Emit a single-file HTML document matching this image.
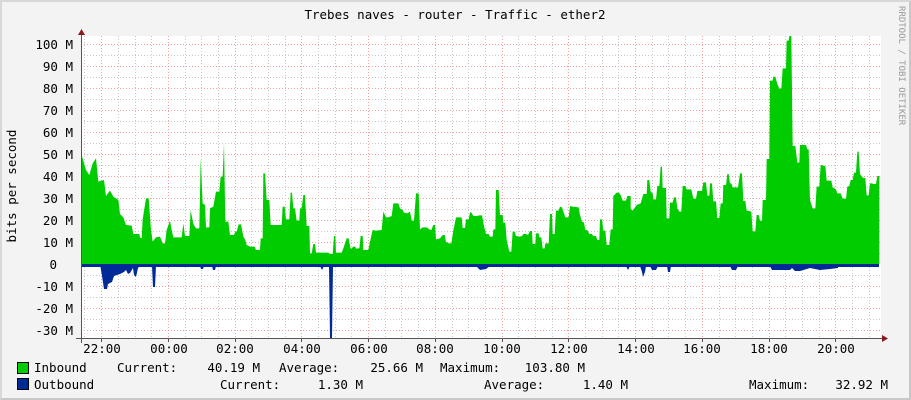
<!DOCTYPE html>
<html><head><meta charset="utf-8"><style>
html,body{margin:0;padding:0;}
body{width:911px;height:400px;background:#f3f3f3;position:relative;overflow:hidden;font-family:"DejaVu Sans Mono","Liberation Mono",monospace;color:#000;}
.fr{position:absolute;left:0;top:0;width:907px;height:396px;border:2px solid #c8c8c8;border-left-color:#d8d8d8;border-top-color:#d8d8d8;}
.t{position:absolute;font-size:12.5px;line-height:14px;white-space:pre;}
.r{text-align:right;}
</style></head><body>
<div class="fr"></div>
<svg width="911" height="400" style="position:absolute;left:0;top:0">
<rect x="81" y="36" width="800" height="302" fill="#fff"/>
<g stroke-dasharray="1,2" stroke-width="1">
<g stroke="#c8c8c8">
<line x1="81" y1="55.5" x2="881" y2="55.5"/><line x1="81" y1="77.5" x2="881" y2="77.5"/><line x1="81" y1="99.5" x2="881" y2="99.5"/><line x1="81" y1="121.5" x2="881" y2="121.5"/><line x1="81" y1="143.5" x2="881" y2="143.5"/><line x1="81" y1="165.5" x2="881" y2="165.5"/><line x1="81" y1="187.5" x2="881" y2="187.5"/><line x1="81" y1="209.5" x2="881" y2="209.5"/><line x1="81" y1="231.5" x2="881" y2="231.5"/><line x1="81" y1="253.5" x2="881" y2="253.5"/><line x1="81" y1="275.5" x2="881" y2="275.5"/><line x1="81" y1="297.5" x2="881" y2="297.5"/><line x1="81" y1="319.5" x2="881" y2="319.5"/>
</g>
<g id="vminor" stroke="#c8c8c8"></g>
<g stroke="#f4a0a0">
<line x1="81" y1="44.5" x2="881" y2="44.5"/><line x1="81" y1="66.5" x2="881" y2="66.5"/><line x1="81" y1="88.5" x2="881" y2="88.5"/><line x1="81" y1="110.5" x2="881" y2="110.5"/><line x1="81" y1="132.5" x2="881" y2="132.5"/><line x1="81" y1="154.5" x2="881" y2="154.5"/><line x1="81" y1="176.5" x2="881" y2="176.5"/><line x1="81" y1="198.5" x2="881" y2="198.5"/><line x1="81" y1="220.5" x2="881" y2="220.5"/><line x1="81" y1="242.5" x2="881" y2="242.5"/><line x1="81" y1="286.5" x2="881" y2="286.5"/><line x1="81" y1="308.5" x2="881" y2="308.5"/><line x1="81" y1="330.5" x2="881" y2="330.5"/>
<line x1="101.5" y1="36" x2="101.5" y2="338"/><line x1="168.5" y1="36" x2="168.5" y2="338"/><line x1="235.5" y1="36" x2="235.5" y2="338"/><line x1="301.5" y1="36" x2="301.5" y2="338"/><line x1="368.5" y1="36" x2="368.5" y2="338"/><line x1="435.5" y1="36" x2="435.5" y2="338"/><line x1="502.5" y1="36" x2="502.5" y2="338"/><line x1="568.5" y1="36" x2="568.5" y2="338"/><line x1="635.5" y1="36" x2="635.5" y2="338"/><line x1="702.5" y1="36" x2="702.5" y2="338"/><line x1="769.5" y1="36" x2="769.5" y2="338"/><line x1="835.5" y1="36" x2="835.5" y2="338"/>
</g>
<g stroke="#c8c8c8">
<line x1="84.5" y1="36" x2="84.5" y2="338"/><line x1="118.5" y1="36" x2="118.5" y2="338"/><line x1="135.5" y1="36" x2="135.5" y2="338"/><line x1="151.5" y1="36" x2="151.5" y2="338"/><line x1="185.5" y1="36" x2="185.5" y2="338"/><line x1="201.5" y1="36" x2="201.5" y2="338"/><line x1="218.5" y1="36" x2="218.5" y2="338"/><line x1="251.5" y1="36" x2="251.5" y2="338"/><line x1="268.5" y1="36" x2="268.5" y2="338"/><line x1="285.5" y1="36" x2="285.5" y2="338"/><line x1="318.5" y1="36" x2="318.5" y2="338"/><line x1="335.5" y1="36" x2="335.5" y2="338"/><line x1="351.5" y1="36" x2="351.5" y2="338"/><line x1="385.5" y1="36" x2="385.5" y2="338"/><line x1="401.5" y1="36" x2="401.5" y2="338"/><line x1="418.5" y1="36" x2="418.5" y2="338"/><line x1="452.5" y1="36" x2="452.5" y2="338"/><line x1="468.5" y1="36" x2="468.5" y2="338"/><line x1="485.5" y1="36" x2="485.5" y2="338"/><line x1="518.5" y1="36" x2="518.5" y2="338"/><line x1="535.5" y1="36" x2="535.5" y2="338"/><line x1="552.5" y1="36" x2="552.5" y2="338"/><line x1="585.5" y1="36" x2="585.5" y2="338"/><line x1="602.5" y1="36" x2="602.5" y2="338"/><line x1="618.5" y1="36" x2="618.5" y2="338"/><line x1="652.5" y1="36" x2="652.5" y2="338"/><line x1="668.5" y1="36" x2="668.5" y2="338"/><line x1="685.5" y1="36" x2="685.5" y2="338"/><line x1="719.5" y1="36" x2="719.5" y2="338"/><line x1="735.5" y1="36" x2="735.5" y2="338"/><line x1="752.5" y1="36" x2="752.5" y2="338"/><line x1="785.5" y1="36" x2="785.5" y2="338"/><line x1="802.5" y1="36" x2="802.5" y2="338"/><line x1="819.5" y1="36" x2="819.5" y2="338"/><line x1="852.5" y1="36" x2="852.5" y2="338"/><line x1="869.5" y1="36" x2="869.5" y2="338"/>
</g>
</g>
<g fill="#00cc00">
<g transform="translate(80,130) scale(0.33333)">
<polygon points="3,402 3,70 8,85 18,120 28,135 38,100 48,85 55,155 72,150 78,198 90,182 100,200 115,210 120,252 130,262 138,285 155,287 160,312 178,312 180,322 185,325 188,268 198,205 206,205 213,300 218,335 228,322 240,320 248,340 255,340 260,300 270,272 275,300 280,322 305,322 310,280 315,318 328,318 332,240 340,282 348,295 358,295 362,85 368,220 375,225 378,292 388,292 390,235 400,230 408,185 418,185 422,140 428,140 432,40 436,275 445,275 450,315 462,315 466,305 470,305 476,283 483,283 490,320 496,330 500,345 510,350 524,350 528,360 540,360 542,325 548,325 550,130 555,130 560,210 568,210 572,285 585,285 605,285 608,230 614,230 618,268 628,268 632,188 636,188 640,235 645,235 650,272 658,272 660,235 665,235 670,195 675,195 680,288 688,288 690,370 695,370 700,342 705,342 708,368 745,368 750,372 758,372 762,318 766,318 768,368 785,368 790,355 800,325 806,325 812,358 820,350 826,350 830,362 838,355 842,352 842,402"/>
</g>
<g transform="translate(350,130) scale(0.33333)">
<polygon points="0,402 0,352 8,362 15,362 20,355 28,355 32,318 38,318 40,360 55,360 60,335 68,300 78,302 95,300 100,245 108,262 115,262 125,258 130,220 145,220 150,235 158,240 162,248 172,250 180,245 185,272 192,272 198,190 206,190 210,298 218,292 230,292 238,298 244,300 250,285 255,285 258,328 270,325 278,315 284,315 288,336 298,340 304,340 310,302 318,262 335,262 338,294 345,294 348,268 356,268 360,247 364,247 370,258 380,258 388,256 396,256 402,288 408,312 416,312 420,320 428,320 430,298 436,298 438,180 446,180 450,255 458,255 460,278 466,278 470,330 478,365 484,365 488,305 494,305 498,318 510,320 516,318 520,312 528,312 534,315 540,303 546,303 548,342 556,342 558,310 566,310 568,322 574,322 578,355 584,355 586,340 596,340 600,252 606,252 608,312 614,312 618,242 626,242 630,230 636,232 646,262 656,262 660,228 668,230 686,232 690,255 696,275 702,278 706,300 712,300 718,312 725,312 730,318 738,318 742,330 748,330 750,268 756,268 760,302 766,302 770,345 778,345 782,298 788,298 790,198 800,188 806,188 812,195 818,212 828,212 832,198 842,198 842,402"/>
</g>
<g transform="translate(610,30) scale(0.33333)">
<polygon points="58,702 58,532 68,542 80,525 92,520 100,492 110,492 112,450 118,450 122,485 128,490 130,508 138,508 142,468 148,468 152,410 156,410 158,474 168,474 170,565 178,565 180,518 188,518 192,502 198,502 202,535 208,545 214,545 218,468 226,468 230,478 244,478 250,506 258,506 262,483 276,483 280,457 288,457 292,497 298,497 300,460 306,460 310,514 318,514 322,564 328,564 332,520 338,520 340,465 348,465 352,432 356,432 360,460 364,460 368,472 384,472 390,430 396,430 400,513 406,513 410,542 424,545 428,604 436,604 440,555 446,555 450,572 456,572 458,510 468,510 470,387 478,387 480,152 488,152 490,140 496,140 502,162 508,176 514,176 518,115 528,115 530,32 536,32 538,18 544,18 548,348 556,348 562,398 568,398 570,345 588,345 592,358 596,358 600,510 608,535 616,535 620,470 628,470 632,405 646,408 650,452 664,452 668,472 678,478 682,490 692,490 698,506 708,506 712,470 718,468 722,450 728,450 732,428 738,428 742,365 746,365 750,432 756,440 760,444 766,444 770,496 776,496 780,460 786,460 790,462 798,462 802,438 808,438 808,702"/>
</g>
</g>
<g fill="#002a97">
<rect x="81" y="264" width="798" height="3"/>
<polygon points="100,264 102,276 104,289 107,289 108,284 112,282 114,276 120,274 124,272 126,270 128,274 130,273 133,268 134,275 136,277 138,268 140,266 100,266"/>
<polygon points="152,266 153,287 155,287 156,266"/>
<polygon points="200,266 201,269 203,269 204,266"/><polygon points="212,266 213,270 215,270 216,266"/>
<polygon points="320,266 322,270 324,266"/>
<polygon points="329,266 330,338 332,338 333,266"/>
<polygon points="476,266 480,270 486,269 490,266"/>
<polygon points="626,266 628,270 630,266"/>
<polygon points="640,266 642,272 643,277 645,272 646,266"/>
<polygon points="650,266 652,270 656,270 658,266"/>
<polygon points="667,266 668,272 670,272 671,266"/>
<polygon points="730,266 732,270 736,270 738,266"/>
<polygon points="770,266 772,270 790,270 792,268 795,271 800,271 810,268 820,270 830,269 838,268 838,266"/>
</g>
<line x1="81.5" y1="30" x2="81.5" y2="343" stroke="#555" stroke-width="1"/>
<line x1="76" y1="338.5" x2="886" y2="338.5" stroke="#555" stroke-width="1"/>
<polygon points="78,35 85,35 81.5,29" fill="#8b1a1a"/>
<polygon points="882,335 882,342 888,338.5" fill="#8b1a1a"/>
<g stroke="#555"><line x1="101.5" y1="338" x2="101.5" y2="342"/><line x1="168.5" y1="338" x2="168.5" y2="342"/><line x1="235.5" y1="338" x2="235.5" y2="342"/><line x1="301.5" y1="338" x2="301.5" y2="342"/><line x1="368.5" y1="338" x2="368.5" y2="342"/><line x1="435.5" y1="338" x2="435.5" y2="342"/><line x1="502.5" y1="338" x2="502.5" y2="342"/><line x1="568.5" y1="338" x2="568.5" y2="342"/><line x1="635.5" y1="338" x2="635.5" y2="342"/><line x1="702.5" y1="338" x2="702.5" y2="342"/><line x1="769.5" y1="338" x2="769.5" y2="342"/><line x1="835.5" y1="338" x2="835.5" y2="342"/></g>
<rect x="17.5" y="362.5" width="11" height="11" fill="#00cc00" stroke="#000"/>
<rect x="17.5" y="378.5" width="11" height="11" fill="#002a97" stroke="#000"/>
<text x="455" y="19" text-anchor="middle" font-family="DejaVu Sans Mono, monospace" font-size="12.5">Trebes naves - router - Traffic - ether2</text>
<text transform="translate(16,186) rotate(-90)" text-anchor="middle" font-family="DejaVu Sans Mono, monospace" font-size="12.5">bits per second</text>
<text transform="translate(899,6) rotate(90)" font-family="DejaVu Sans Mono, monospace" font-size="9" fill="#999">RRDTOOL / TOBI OETIKER</text>
<g font-family="DejaVu Sans Mono, monospace" font-size="12.5" text-anchor="end">
<text x="73" y="49">100 M</text><text x="73" y="71">90 M</text><text x="73" y="93">80 M</text><text x="73" y="115">70 M</text><text x="73" y="137">60 M</text><text x="73" y="159">50 M</text><text x="73" y="181">40 M</text><text x="73" y="203">30 M</text><text x="73" y="225">20 M</text><text x="73" y="247">10 M</text><text x="57" y="269">0</text><text x="73" y="291">-10 M</text><text x="73" y="313">-20 M</text><text x="73" y="335">-30 M</text>
</g>
<g font-family="DejaVu Sans Mono, monospace" font-size="12.5" text-anchor="middle">
<text x="102" y="353">22:00</text><text x="169" y="353">00:00</text><text x="235" y="353">02:00</text><text x="302" y="353">04:00</text><text x="369" y="353">06:00</text><text x="435" y="353">08:00</text><text x="502" y="353">10:00</text><text x="569" y="353">12:00</text><text x="636" y="353">14:00</text><text x="702" y="353">16:00</text><text x="769" y="353">18:00</text><text x="836" y="353">20:00</text>
</g>
<g font-family="DejaVu Sans Mono, monospace" font-size="12.5">
<text x="34" y="372">Inbound</text><text x="117" y="372">Current:</text><text x="260" y="372" text-anchor="end">40.19 M</text><text x="279" y="372">Average:</text><text x="423" y="372" text-anchor="end">25.66 M</text><text x="440" y="372">Maximum:</text><text x="585" y="372" text-anchor="end">103.80 M</text>
<text x="34" y="389">Outbound</text><text x="220" y="389">Current:</text><text x="363" y="389" text-anchor="end">1.30 M</text><text x="484" y="389">Average:</text><text x="628" y="389" text-anchor="end">1.40 M</text><text x="749" y="389">Maximum:</text><text x="888" y="389" text-anchor="end">32.92 M</text>
</g>
</svg>
</body></html>
